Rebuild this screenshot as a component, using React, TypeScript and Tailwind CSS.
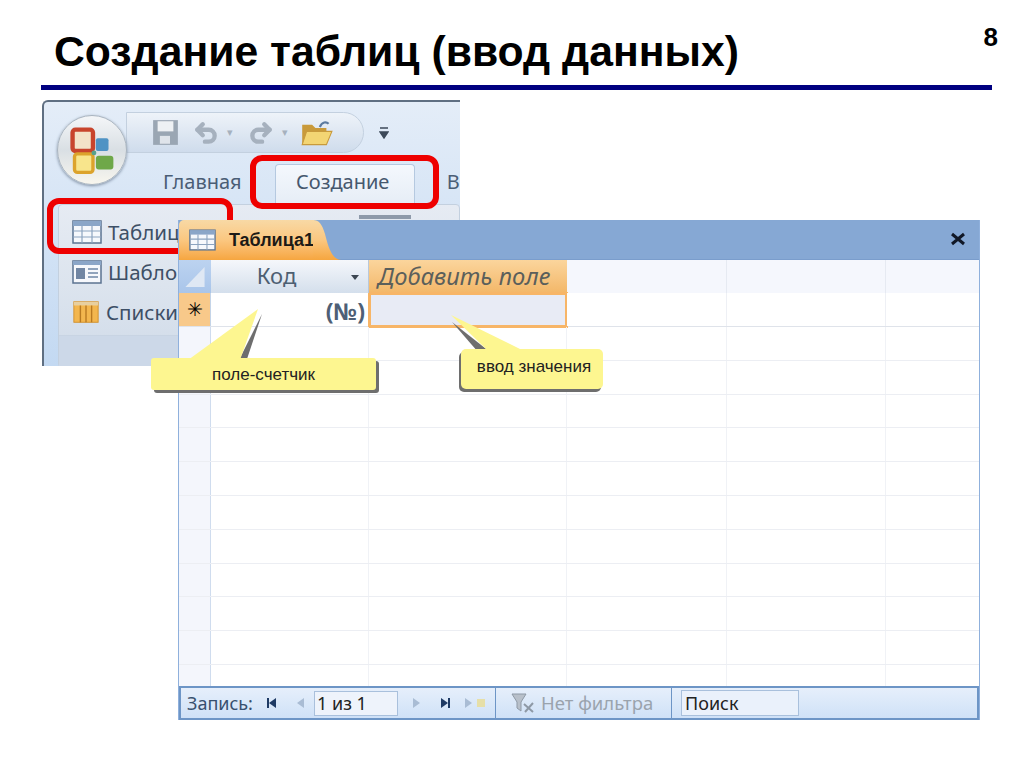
import { Redo2, Undo2 } from 'lucide-react';

const columns = ['w-[32px]', 'w-[158px]', 'w-[198px]', 'w-[160px]', 'w-[159px]', 'flex-1'];
const blankRows = Array.from({ length: 11 }, (_, i) => i);

function GridIcon({ className }: { className?: string }) {
  return (
    <svg viewBox="0 0 30 24" className={className}>
      <rect x="1" y="1" width="28" height="22" fill="#f6f8fc" stroke="#5b7391" strokeWidth="1.5" />
      <rect x="1" y="1" width="28" height="5" fill="#8ba6c8" />
      <path d="M1 11h28M1 17h28M10 6v17M20 6v17" stroke="#8ca3bf" strokeWidth="1.2" />
    </svg>
  );
}

function OfficeButton() {
  return (
    <div className="absolute left-[13px] top-[13px] w-[70px] h-[70px] rounded-full border border-[#a9b4bf] bg-gradient-to-b from-[#f4f6f8] via-[#d9dfe4] to-[#f8f6ee] shadow-[0_1px_3px_#7f8fa3]">
      <svg viewBox="0 0 70 70" className="w-full h-full blur-[0.6px]">
        <rect x="15" y="14" width="21" height="22" rx="3" fill="#f3e2c8" stroke="#c8442c" strokeWidth="4.5" />
        <rect x="39" y="23" width="13" height="13" rx="2" fill="#4f93c4" />
        <rect x="17" y="39" width="19" height="19" rx="3" fill="#f8e58c" stroke="#dca32c" strokeWidth="3.5" />
        <rect x="39" y="41" width="18" height="14" rx="3" fill="#6fa848" />
        <circle cx="37" cy="38" r="2.5" fill="#58a08c" />
      </svg>
    </div>
  );
}

function QuickAccess() {
  return (
    <div className="ml-[82px] mt-[10px] flex items-center">
      <div className="w-[238px] h-[41px] rounded-r-full bg-gradient-to-b from-[#eef3f9] to-[#cfdcec] border border-[#c3d0df] flex items-center pl-[25px] text-[#a6b1be]">
        <svg viewBox="0 0 24 24" className="w-[27px] h-[27px]">
          <rect x="1" y="1" width="22" height="22" fill="#9aa6b3" />
          <rect x="5" y="2" width="14" height="9" fill="#eef1f4" />
          <rect x="7" y="15" width="9" height="7" fill="#dfe4ea" />
        </svg>
        <Undo2 className="ml-[14px] w-[26px] h-[26px]" strokeWidth={4} />
        <span className="ml-[8px] text-[11px]">▾</span>
        <Redo2 className="ml-[15px] w-[26px] h-[26px]" strokeWidth={4} />
        <span className="ml-[8px] text-[11px]">▾</span>
        <svg viewBox="0 0 30 26" className="ml-[12px] w-[33px] h-[29px]">
          <path d="M2 6h9l3 3h10v15H2z" fill="#c99a3a" />
          <path d="M6 12h23l-5 12H2z" fill="#f3d573" stroke="#c89a3c" />
          <path d="M18 8c2-5 6-5 8-3" fill="none" stroke="#5c7ba0" strokeWidth="2" />
        </svg>
      </div>
      <svg viewBox="0 0 10 14" className="ml-[15px] w-[10px] h-[14px]">
        <path d="M1 2h8M1 6h8l-4 6z" stroke="#3d4a5a" strokeWidth="1.5" fill="#3d4a5a" />
      </svg>
    </div>
  );
}

function RibbonRow({ icon, label }: { icon: React.ReactNode; label: string }) {
  return (
    <div className="h-[40px] flex items-center gap-[6px] pl-[13px]">
      {icon}
      <span className="text-[20.5px] text-[#3d4f66] whitespace-nowrap">{label}</span>
    </div>
  );
}

function RibbonWindow() {
  return (
    <div className="absolute left-[42px] top-[100px] w-[418px] h-[266px] overflow-hidden border-t-2 border-l-2 border-[#5f6f82] rounded-tl-[6px] bg-gradient-to-b from-[#e4edf8] to-[#c3d9f2] [font-family:'Noto_Sans','Liberation_Sans',sans-serif]">
      <OfficeButton />
      <QuickAccess />
      <div className="h-[9px]" />
      <div className="flex h-[42px] items-end">
        <span className="ml-[119px] mb-[12px] text-[20px] leading-none text-[#4a5d75]">Главная</span>
        <div className="ml-[33px] w-[140px] h-[40px] rounded-t-[4px] bg-gradient-to-b from-[#f4f8fd] to-[#e6edf6] border border-b-0 border-[#b5c9e0] pr-[4px] text-center text-[20px] leading-[34px] text-[#46586e]">
          Создание
        </div>
        <span className="ml-[32px] mb-[12px] text-[20px] leading-none text-[#4a5d75]">В</span>
      </div>
      <div className="relative ml-[14px] h-[164px] rounded-[4px] border border-[#c3d0df] bg-gradient-to-b from-[#e6ebf3] via-[#dce4ee] to-[#d0dbe9] pt-[7px] flex flex-col">
        <div className="absolute left-[300px] top-[10px] w-[52px] h-[4px] bg-[#8e9aaa]" />
        <RibbonRow icon={<GridIcon className="w-[30px] h-[24px]" />} label="Таблица" />
        <RibbonRow
          icon={
            <svg viewBox="0 0 30 24" className="w-[30px] h-[24px]">
              <rect x="1" y="1" width="28" height="22" fill="#f6f8fc" stroke="#5b7391" strokeWidth="1.5" />
              <rect x="1" y="1" width="28" height="4" fill="#8ba6c8" />
              <rect x="4" y="8" width="9" height="11" fill="#7186a3" />
              <path d="M16 9h10M16 13h10M16 17h10" stroke="#6f86a6" strokeWidth="1.5" />
            </svg>
          }
          label="Шаблоны"
        />
        <RibbonRow
          icon={
            <svg viewBox="0 0 30 26" className="w-[28px] h-[26px]">
              <rect x="2" y="2" width="26" height="22" fill="#f3b64e" stroke="#d18f2a" />
              <rect x="2" y="2" width="26" height="4" fill="#e8cf9f" />
              <path d="M9 6v18M15 6v18M21 6v18" stroke="#b97a22" strokeWidth="1.5" />
            </svg>
          }
          label="Списки"
        />
        <div className="mt-[3px] flex-1 border-t border-[#c8d4e3] bg-[#ccd8e8]" />
      </div>
    </div>
  );
}

function HeaderRow() {
  return (
    <div className="flex h-[33px] shrink-0">
      <div className={`${columns[0]} bg-gradient-to-b from-[#bcd3f0] to-[#a9c5ea] p-[5px]`}>
        <svg viewBox="0 0 22 24" className="w-full h-full">
          <path d="M1 23 21 2v21z" fill="#dfe8f4" />
        </svg>
      </div>
      <div className={`${columns[1]} relative bg-gradient-to-b from-[#f5f7fb] to-[#d4dfec] border-r border-[#b9c8da] pr-[26px] text-center text-[22px] leading-[31px] text-[#4d5f72]`}>
        Код
        <span className="absolute right-[9px] top-[15px] w-0 h-0 border-x-[4px] border-x-transparent border-t-[5px] border-t-[#3c4652]" />
      </div>
      <div className={`${columns[2]} bg-gradient-to-b from-[#fbd59c] to-[#f3b768] pl-[9px] text-[23.7px] italic leading-[32px] text-[#5b5f5b] whitespace-nowrap`}>
        Добавить поле
      </div>
      <div className={`${columns[3]} bg-[#f5f7fd] border-r border-[#e6eaf2]`} />
      <div className={`${columns[4]} bg-[#f5f7fd] border-r border-[#e6eaf2]`} />
      <div className={`${columns[5]} bg-[#f5f7fd]`} />
    </div>
  );
}

function NewRecordRow() {
  return (
    <div className="flex h-[34px] shrink-0 border-b border-[#dfe3ea]">
      <div className={`${columns[0]} bg-[#f8c98a] border-r border-[#c4d4e8] text-center text-[19px] leading-[33px] text-black`}>✳</div>
      <div className={`${columns[1]} bg-white border-r border-[#eef0f5] pr-[3px] text-right text-[23px] font-bold leading-[36px] text-[#4e5f76]`}>(№)</div>
      <div className="-mx-[1px] -mt-[1px] w-[200px] h-[36px] bg-[#e8ebf5] border-[3px] border-[#f7b567]" />
      <div className={`${columns[3]} bg-white border-r border-[#eef0f5]`} />
      <div className={`${columns[4]} bg-white border-r border-[#eef0f5]`} />
      <div className={`${columns[5]} bg-white`} />
    </div>
  );
}

function BlankRow() {
  return (
    <div className="flex h-[33.8px] shrink-0 border-b border-[#eceef3]">
      <div className={`${columns[0]} bg-[#f4f6fc] border-r border-[#cfdcee]`} />
      <div className={`${columns[1]} border-r border-[#f0f2f6]`} />
      <div className={`${columns[2]} border-r border-[#f0f2f6]`} />
      <div className={`${columns[3]} border-r border-[#f0f2f6]`} />
      <div className={`${columns[4]} border-r border-[#f0f2f6]`} />
      <div className={columns[5]} />
    </div>
  );
}

function NavButton({ dir, bar, faint }: { dir: 'l' | 'r'; bar?: boolean; faint?: boolean }) {
  const fill = faint ? '#a9bcd4' : '#1e3a64';
  return (
    <svg viewBox="0 0 12 12" className="w-[12px] h-[12px]">
      {dir === 'l' ? <path d="M10 1v10L3 6z" fill={fill} /> : <path d="M2 1v10l7-5z" fill={fill} />}
      {bar && <rect x={dir === 'l' ? 1 : 9} y="1" width="2" height="10" fill={fill} />}
    </svg>
  );
}

function StatusBar() {
  return (
    <div className="h-[34px] shrink-0 border-2 border-[#6d95c6] bg-gradient-to-b from-[#e6effb] to-[#cfe1f7] flex items-center text-[18px] [font-family:'Noto_Sans','Liberation_Sans',sans-serif]">
      <span className="ml-[6px] w-[79px] text-[#37506f]">Запись:</span>
      <NavButton dir="l" bar />
      <span className="w-[16px]" />
      <NavButton dir="l" faint />
      <div className="ml-[8px] w-[84px] h-[25px] bg-[#eef3fb] border border-[#a9c0dc] pl-[2px] leading-[23px] text-[#222]">1 из 1</div>
      <span className="w-[13px]" />
      <NavButton dir="r" faint />
      <span className="w-[16px]" />
      <NavButton dir="r" bar />
      <span className="w-[12px]" />
      <NavButton dir="r" faint />
      <span className="ml-[2px] w-[8px] h-[8px] bg-[#e6dfa8]" />
      <div className="ml-[10px] h-full border-l border-[#6d95c6] flex items-center pl-[14px] w-[176px]">
        <svg viewBox="0 0 26 22" className="w-[26px] h-[22px]">
          <path d="M2 2h14l-5 8v9l-4-3v-6z" fill="#b8c0ca" stroke="#8e99a6" />
          <path d="M14 12l9 8M23 11l-8 9" stroke="#8e99a6" strokeWidth="2" />
        </svg>
        <span className="ml-[5px] text-[18.5px] text-[#9aa3ad] whitespace-nowrap">Нет фильтра</span>
      </div>
      <div className="h-full border-l border-[#6d95c6] flex items-center pl-[9px]">
        <div className="w-[118px] h-[26px] bg-[#eaf1fb] border border-[#a9c0dc] pl-[3px] leading-[24px] text-[#222]">Поиск</div>
      </div>
    </div>
  );
}

function TableWindow() {
  return (
    <div className="absolute left-[178px] top-[220px] w-[802px] h-[500px] flex flex-col overflow-hidden bg-white border-x border-[#8fb0dc] [font-family:'Noto_Sans','Liberation_Sans',sans-serif]">
      <div className="h-[40px] shrink-0 flex bg-[#86a8d4] border-b border-[#7a9dcc]">
        <div className="relative w-[135px] h-[40px] rounded-tl-[5px] bg-gradient-to-b from-[#f8d9a5] via-[#fbc780] to-[#f6a63f] flex items-center pl-[10px] gap-[13px]">
          <GridIcon className="w-[27px] h-[22px]" />
          <span className="text-[18px] font-bold text-[#1c1a16] whitespace-nowrap [font-family:'Liberation_Sans',sans-serif]">Таблица1</span>
          <svg viewBox="0 0 28 40" preserveAspectRatio="none" className="absolute -right-[27px] top-0 w-[28px] h-[40px]">
            <defs>
              <linearGradient id="tabFill" x1="0" y1="0" x2="0" y2="1">
                <stop offset="0" stopColor="#f8d9a5" />
                <stop offset="0.5" stopColor="#fbc780" />
                <stop offset="1" stopColor="#f6a63f" />
              </linearGradient>
            </defs>
            <path d="M0 0c6 0 9 4 12 14 3 12 7 26 16 26H0z" fill="url(#tabFill)" />
          </svg>
        </div>
        <svg viewBox="0 0 16 14" className="ml-auto mr-[13px] mt-[12px] w-[16px] h-[14px]">
          <path d="M2 2l12 10M14 2 2 12" stroke="#111827" strokeWidth="3" />
        </svg>
      </div>
      <HeaderRow />
      <NewRecordRow />
      <div className="flex-1 overflow-hidden">
        {blankRows.map((row) => (
          <BlankRow key={row} />
        ))}
      </div>
      <StatusBar />
    </div>
  );
}

function Callouts() {
  return (
    <>
      <svg viewBox="0 0 1024 767" className="absolute inset-0 w-[1024px] h-[767px] pointer-events-none">
        <path d="M262 314 246 362h-8z" fill="#6e6e6e" />
        <path d="M258 309 188 360h52z" fill="#fdf690" />
        <path d="M452 322 490 352h-12z" fill="#6e6e6e" />
        <path d="M451 315 520 349h-34z" fill="#fdf690" />
      </svg>
      <div className="absolute left-[151px] top-[358px] w-[225px] h-[32px] rounded-[3px] bg-[#fdf690] shadow-[3px_3px_0_#6e6e6e] text-center text-[17px] leading-[34px] text-[#222] [font-family:'Liberation_Sans',sans-serif]">
        поле-счетчик
      </div>
      <div className="absolute left-[461px] top-[349px] w-[142px] h-[40px] rounded-[5px] bg-[#fdf690] shadow-[-2px_3px_0_#6e6e6e] pl-[4px] text-center text-[17px] leading-[36px] text-[#222] [font-family:'Liberation_Sans',sans-serif]">
        ввод значения
      </div>
    </>
  );
}

export default function App() {
  return (
    <div className="relative w-[1024px] h-[767px] overflow-hidden bg-white [font-family:'Liberation_Sans',sans-serif]">
      <div className="ml-[41px] w-[951px] h-[90px] border-b-[5px] border-[#000080] flex justify-between">
        <h1 className="ml-[13px] mt-[27px] text-[42.7px] leading-[48px] font-bold text-black whitespace-nowrap">
          Создание таблиц (ввод данных)
        </h1>
        <span className="-mr-[6px] mt-[22px] text-[26px] leading-[30px] font-bold text-black">8</span>
      </div>

      <RibbonWindow />

      {/* red highlights */}
      <div className="absolute left-[250px] top-[155px] w-[189px] h-[54px] rounded-[12px] border-[6px] border-[#ee0000]" />
      <div className="absolute left-[47px] top-[198px] w-[186px] h-[56px] rounded-[12px] border-[6px] border-[#ee0000]" />

      <TableWindow />
      <Callouts />
    </div>
  );
}
